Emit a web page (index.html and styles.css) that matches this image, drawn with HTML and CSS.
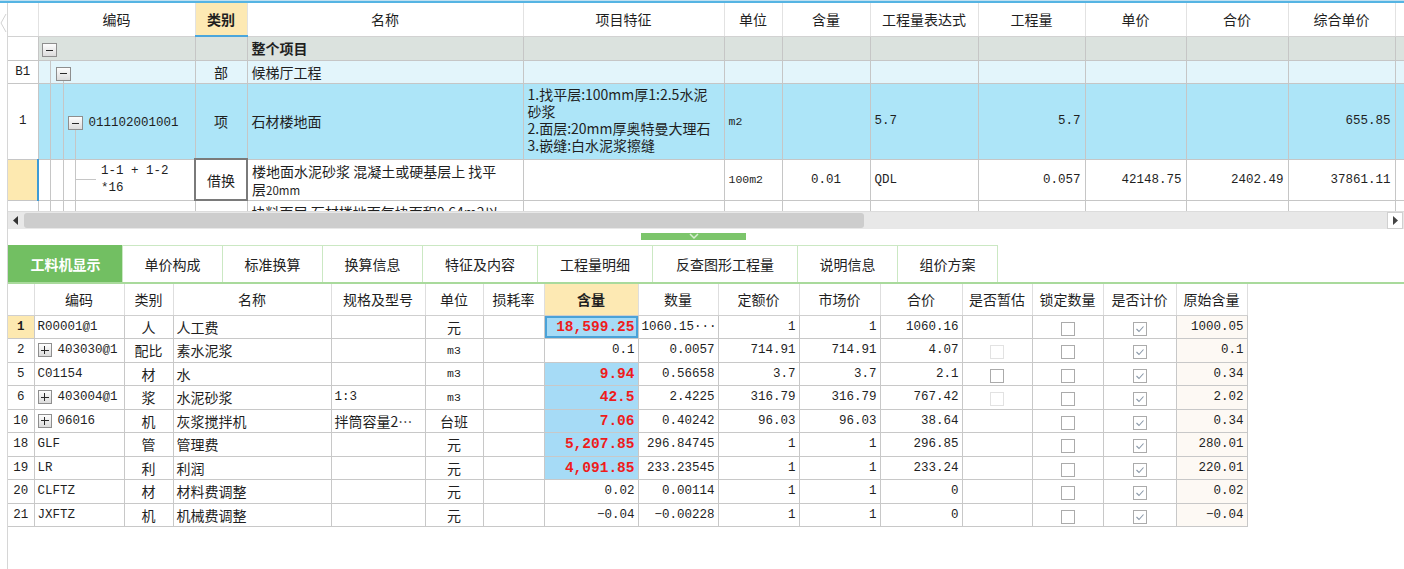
FILE: index.html
```html
<!DOCTYPE html>
<html lang="zh-CN">
  <head>
    <meta charset="UTF-8" />
    <meta name="viewport" content="width=device-width, initial-scale=1.0" />
    <title>分部分项</title>
    <link rel="stylesheet" href="styles.css">
  </head>
  <body>
    <div class="topline"></div>
    <div class="app">
      <div class="gutter">
        <svg width="7" height="20" viewBox="0 0 7 20"><polyline points="6,1 1,10 6,19" fill="none" stroke="#d2d2d2" stroke-width="1"/></svg>
      </div>
      <div class="main">
        <!-- upper grid: bill items -->
        <div class="grid">
          <table class="bill">
            <colgroup>
              <col class="w-no"><col class="w-code"><col class="w-type"><col class="w-name"><col class="w-feat">
              <col class="w-unit"><col class="w-qty"><col class="w-expr"><col class="w-amt"><col class="w-price">
              <col class="w-total"><col class="w-comp"><col class="w-rest">
            </colgroup>
            <tr class="head">
              <th></th><th>编码</th><th class="sel">类别</th><th>名称</th><th>项目特征</th>
              <th>单位</th><th>含量</th><th>工程量表达式</th><th>工程量</th><th>单价</th>
              <th>合价</th><th>综合单价</th><th></th>
            </tr>
            <tr class="r-root">
              <td class="no"></td>
              <td class="tree lv0"><span class="tbox"></span></td>
              <td></td>
              <td class="bold">整个项目</td>
              <td></td><td></td><td></td><td></td><td></td><td></td><td></td><td></td><td></td>
            </tr>
            <tr class="r-part">
              <td class="no m">B1</td>
              <td class="tree lv1"><span class="tbox"></span></td>
              <td class="c">部</td>
              <td>候梯厅工程</td>
              <td></td><td></td><td></td><td></td><td></td><td></td><td></td><td></td><td></td>
            </tr>
            <tr class="r-item">
              <td class="no m">1</td>
              <td class="tree lv2"><span class="tbox"></span><span class="m code">011102001001</span></td>
              <td class="c">项</td>
              <td>石材楼地面</td>
              <td class="feat">1.找平层:100mm厚1:2.5水泥<br>砂浆<br>2.面层:20mm厚奥特曼大理石<br>3.嵌缝:白水泥浆擦缝</td>
              <td class="m small">m2</td>
              <td></td>
              <td class="m">5.7</td>
              <td class="m r">5.7</td>
              <td></td><td></td>
              <td class="m r">655.85</td>
              <td></td>
            </tr>
            <tr class="r-sub">
              <td class="no cur"></td>
              <td class="tree lv3"><span class="m code2">1-1 + 1-2<br>*16</span></td>
              <td class="c focus">借换</td>
              <td class="wrap">楼地面水泥砂浆 混凝土或硬基层上 找平<br>层<span class="small">20mm</span></td>
              <td></td>
              <td class="m small">100m2</td>
              <td class="m c">0.01</td>
              <td class="m">QDL</td>
              <td class="m r">0.057</td>
              <td class="m r">42148.75</td>
              <td class="m r">2402.49</td>
              <td class="m r">37861.11</td>
              <td></td>
            </tr>
            <tr class="r-next">
              <td class="no"></td>
              <td class="tree lv4"></td>
              <td></td>
              <td class="top">块料面层 石材楼地面每块面积0.64m2以</td>
              <td></td><td></td><td></td><td></td><td></td><td></td><td></td><td></td><td></td>
            </tr>
          </table>
        </div>

        <div class="hscroll">
          <div class="sbtn">
            <svg width="6" height="9" viewBox="0 0 6 9"><polygon points="5,0 0,4.5 5,9" fill="#333"/></svg>
          </div>
          <div class="thumb"></div>
          <div class="track"></div>
          <div class="sbtn right">
            <svg width="6" height="9" viewBox="0 0 6 9"><polygon points="1,0 6,4.5 1,9" fill="#444"/></svg>
          </div>
        </div>

        <div class="splitter">
          <div class="handle">
            <svg width="12" height="7" viewBox="0 0 12 7"><polyline points="2,1 6,5 10,1" fill="none" stroke="#d8efd2" stroke-width="1.5"/></svg>
          </div>
        </div>

        <div class="tabs">
          <div class="tab active t114">工料机显示</div>
          <div class="tab t100">单价构成</div>
          <div class="tab t100">标准换算</div>
          <div class="tab t100">换算信息</div>
          <div class="tab t115">特征及内容</div>
          <div class="tab t115">工程量明细</div>
          <div class="tab t145">反查图形工程量</div>
          <div class="tab t100">说明信息</div>
          <div class="tab t100">组价方案</div>
        </div>

        <!-- lower grid: labour, material, machine -->
        <table class="lmm">
          <colgroup>
            <col class="w-bno"><col class="w-bcode"><col class="w-btype"><col class="w-bname"><col class="w-spec">
            <col class="w-bunit"><col class="w-loss"><col class="w-hl"><col class="w-num"><col class="w-quota">
            <col class="w-market"><col class="w-sum"><col class="w-est"><col class="w-lock"><col class="w-calc"><col class="w-orig">
          </colgroup>
          <tr class="head">
            <th></th><th>编码</th><th>类别</th><th>名称</th><th>规格及型号</th><th>单位</th><th>损耗率</th>
            <th class="sel">含量</th><th>数量</th><th>定额价</th><th>市场价</th><th>合价</th>
            <th>是否暂估</th><th>锁定数量</th><th>是否计价</th><th>原始含量</th>
          </tr>
          <tr>
            <td class="no cur bold m">1</td><td class="m">R00001@1</td><td class="c">人</td><td>人工费</td><td></td><td class="c">元</td><td></td>
            <td class="hl focus-hl r">18,599.25</td><td class="m r">1060.15···</td><td class="m r">1</td><td class="m r">1</td><td class="m r">1060.16</td>
            <td></td><td class="c"><span class="cb"></span></td><td class="c"><span class="cb"><svg width="12" height="12" viewBox="0 0 12 12"><polyline points="2.5,6 5,8.5 9.5,3.5" fill="none" stroke="#8a98a8" stroke-width="1.1"/></svg></span></td><td class="orig m r">1000.05</td>
          </tr>
          <tr>
            <td class="no m">2</td><td class="m"><span class="tbox plus"></span><span class="code">403030@1</span></td><td class="c">配比</td><td>素水泥浆</td><td></td><td class="c m small">m3</td><td></td>
            <td class="m r">0.1</td><td class="m r">0.0057</td><td class="m r">714.91</td><td class="m r">714.91</td><td class="m r">4.07</td>
            <td class="c"><span class="cb faint"></span></td><td class="c"><span class="cb"></span></td><td class="c"><span class="cb"><svg width="12" height="12" viewBox="0 0 12 12"><polyline points="2.5,6 5,8.5 9.5,3.5" fill="none" stroke="#8a98a8" stroke-width="1.1"/></svg></span></td><td class="orig m r">0.1</td>
          </tr>
          <tr>
            <td class="no m">5</td><td class="m">C01154</td><td class="c">材</td><td>水</td><td></td><td class="c m small">m3</td><td></td>
            <td class="hl r">9.94</td><td class="m r">0.56658</td><td class="m r">3.7</td><td class="m r">3.7</td><td class="m r">2.1</td>
            <td class="c"><span class="cb"></span></td><td class="c"><span class="cb"></span></td><td class="c"><span class="cb"><svg width="12" height="12" viewBox="0 0 12 12"><polyline points="2.5,6 5,8.5 9.5,3.5" fill="none" stroke="#8a98a8" stroke-width="1.1"/></svg></span></td><td class="orig m r">0.34</td>
          </tr>
          <tr>
            <td class="no m">6</td><td class="m"><span class="tbox plus"></span><span class="code">403004@1</span></td><td class="c">浆</td><td>水泥砂浆</td><td class="m">1:3</td><td class="c m small">m3</td><td></td>
            <td class="hl r">42.5</td><td class="m r">2.4225</td><td class="m r">316.79</td><td class="m r">316.79</td><td class="m r">767.42</td>
            <td class="c"><span class="cb faint"></span></td><td class="c"><span class="cb"></span></td><td class="c"><span class="cb"><svg width="12" height="12" viewBox="0 0 12 12"><polyline points="2.5,6 5,8.5 9.5,3.5" fill="none" stroke="#8a98a8" stroke-width="1.1"/></svg></span></td><td class="orig m r">2.02</td>
          </tr>
          <tr>
            <td class="no m">10</td><td class="m"><span class="tbox plus"></span><span class="code">06016</span></td><td class="c">机</td><td>灰浆搅拌机</td><td>拌筒容量2…</td><td class="c">台班</td><td></td>
            <td class="hl r">7.06</td><td class="m r">0.40242</td><td class="m r">96.03</td><td class="m r">96.03</td><td class="m r">38.64</td>
            <td></td><td class="c"><span class="cb"></span></td><td class="c"><span class="cb"><svg width="12" height="12" viewBox="0 0 12 12"><polyline points="2.5,6 5,8.5 9.5,3.5" fill="none" stroke="#8a98a8" stroke-width="1.1"/></svg></span></td><td class="orig m r">0.34</td>
          </tr>
          <tr>
            <td class="no m">18</td><td class="m">GLF</td><td class="c">管</td><td>管理费</td><td></td><td class="c">元</td><td></td>
            <td class="hl r">5,207.85</td><td class="m r">296.84745</td><td class="m r">1</td><td class="m r">1</td><td class="m r">296.85</td>
            <td></td><td class="c"><span class="cb"></span></td><td class="c"><span class="cb"><svg width="12" height="12" viewBox="0 0 12 12"><polyline points="2.5,6 5,8.5 9.5,3.5" fill="none" stroke="#8a98a8" stroke-width="1.1"/></svg></span></td><td class="orig m r">280.01</td>
          </tr>
          <tr>
            <td class="no m">19</td><td class="m">LR</td><td class="c">利</td><td>利润</td><td></td><td class="c">元</td><td></td>
            <td class="hl r">4,091.85</td><td class="m r">233.23545</td><td class="m r">1</td><td class="m r">1</td><td class="m r">233.24</td>
            <td></td><td class="c"><span class="cb"></span></td><td class="c"><span class="cb"><svg width="12" height="12" viewBox="0 0 12 12"><polyline points="2.5,6 5,8.5 9.5,3.5" fill="none" stroke="#8a98a8" stroke-width="1.1"/></svg></span></td><td class="orig m r">220.01</td>
          </tr>
          <tr>
            <td class="no m">20</td><td class="m">CLFTZ</td><td class="c">材</td><td>材料费调整</td><td></td><td class="c">元</td><td></td>
            <td class="m r">0.02</td><td class="m r">0.00114</td><td class="m r">1</td><td class="m r">1</td><td class="m r">0</td>
            <td></td><td class="c"><span class="cb"></span></td><td class="c"><span class="cb"><svg width="12" height="12" viewBox="0 0 12 12"><polyline points="2.5,6 5,8.5 9.5,3.5" fill="none" stroke="#8a98a8" stroke-width="1.1"/></svg></span></td><td class="orig m r">0.02</td>
          </tr>
          <tr>
            <td class="no m">21</td><td class="m">JXFTZ</td><td class="c">机</td><td>机械费调整</td><td></td><td class="c">元</td><td></td>
            <td class="m r">−0.04</td><td class="m r">−0.00228</td><td class="m r">1</td><td class="m r">1</td><td class="m r">0</td>
            <td></td><td class="c"><span class="cb"></span></td><td class="c"><span class="cb"><svg width="12" height="12" viewBox="0 0 12 12"><polyline points="2.5,6 5,8.5 9.5,3.5" fill="none" stroke="#8a98a8" stroke-width="1.1"/></svg></span></td><td class="orig m r">−0.04</td>
          </tr>
        </table>
      </div>
    </div>
  </body>
</html>
```

FILE: styles.css
```css
* {
  box-sizing: border-box;
}

html,
body {
  height: 100%;
}

body {
  margin: 0;
  font-family: "Noto Sans CJK SC", "Noto Sans", sans-serif;
  font-size: 14px;
  color: #1f1f1f;
  background: #fff;
  overflow: hidden;
}

.topline {
  height: 3px;
  background: #55b4e3;
  border-top: 1px solid #bfe0f1;
}

.app {
  display: flex;
  height: calc(100% - 3px);
}

.gutter {
  width: 7px;
  flex: none;
  padding-top: 10px;
}

.main {
  flex: 1;
  min-width: 0;
  border-left: 1px solid #d6d6d6;
}

table {
  border-collapse: collapse;
  table-layout: fixed;
}

td,
th {
  padding: 0 4px;
  overflow: hidden;
  white-space: nowrap;
  vertical-align: middle;
  text-align: left;
}

.m {
  font-family: "Liberation Mono", monospace;
  font-size: 12.5px;
}

.small {
  font-size: 11.5px;
}

.c {
  text-align: center;
}

.r {
  text-align: right;
}

.bold {
  font-weight: bold;
}

/* upper grid */
.grid {
  height: 208px;
  overflow: hidden;
}

.bill {
  width: 1407px;
}

.w-no { width: 30px; }
.w-code { width: 157px; }
.w-type { width: 52px; }
.w-name { width: 276px; }
.w-feat { width: 201px; }
.w-unit { width: 58px; }
.w-qty { width: 88px; }
.w-expr { width: 108px; }
.w-amt { width: 107px; }
.w-price { width: 101px; }
.w-total { width: 102px; }
.w-comp { width: 107px; }
.w-rest { width: 20px; }

.bill td {
  border: 1px solid #c6c6c6;
}

.bill td:first-child,
.bill th:first-child {
  border-left: none;
}

.bill .head {
  height: 33px;
}

.bill th {
  font-weight: normal;
  text-align: center;
  background: #fff;
  border: 1px solid #e2e2e2;
  border-top: none;
  border-bottom-color: #d2d2d2;
}

th.sel {
  background: #fde9b3;
  font-weight: bold;
  border-bottom: 2px solid #4ba6dc;
}

.r-root {
  height: 24px;
  background: #dbe2de;
}

.r-part {
  height: 23px;
  background: #e3f5fb;
}

.r-item {
  height: 76px;
  background: #ade5f8;
}

.r-sub {
  height: 41px;
  background: #fff;
}

.r-next {
  height: 30px;
}

td.no {
  background: #fff;
  text-align: center;
  padding: 0;
}

td.cur {
  background: #fde9b0;
  border-right: 2px solid #3d9bd6;
}

.tree {
  padding: 0 0 0 3px;
}

.tree.lv1 {
  padding-left: 17px;
  background:
    linear-gradient(#c6c6c6, #c6c6c6) 11px 0 / 1px 100% no-repeat,
    linear-gradient(#c6c6c6, #c6c6c6) 24px 100% / 1px 7px no-repeat;
}

.tree.lv2 {
  padding-left: 29px;
  background:
    linear-gradient(#c6c6c6, #c6c6c6) 11px 0 / 1px 100% no-repeat,
    linear-gradient(#c6c6c6, #c6c6c6) 24px 0 / 1px 100% no-repeat,
    linear-gradient(#c6c6c6, #c6c6c6) 36px 100% / 1px 30px no-repeat;
}

.tree.lv3 {
  padding-left: 62px;
  background:
    linear-gradient(#c6c6c6, #c6c6c6) 11px 0 / 1px 100% no-repeat,
    linear-gradient(#c6c6c6, #c6c6c6) 24px 0 / 1px 100% no-repeat,
    linear-gradient(#c6c6c6, #c6c6c6) 36px 0 / 1px 100% no-repeat,
    linear-gradient(#c6c6c6, #c6c6c6) 36px 50% / 21px 1px no-repeat;
}

.tree.lv4 {
  background:
    linear-gradient(#c6c6c6, #c6c6c6) 11px 0 / 1px 100% no-repeat,
    linear-gradient(#c6c6c6, #c6c6c6) 24px 0 / 1px 100% no-repeat,
    linear-gradient(#c6c6c6, #c6c6c6) 36px 0 / 1px 100% no-repeat;
}

.tbox {
  display: inline-block;
  width: 15px;
  height: 14px;
  vertical-align: middle;
  border: 1px solid #8e8e8e;
  background:
    linear-gradient(#2a2a2a, #2a2a2a) center / 7px 1px no-repeat,
    linear-gradient(#fdfdfd, #dcdcdc);
}

.tbox.plus {
  width: 14px;
  background:
    linear-gradient(#2a2a2a, #2a2a2a) center / 8px 1px no-repeat,
    linear-gradient(#2a2a2a, #2a2a2a) center / 1px 8px no-repeat,
    linear-gradient(#fdfdfd, #dcdcdc);
}

.code {
  margin-left: 6px;
  vertical-align: middle;
}

.code2 {
  display: inline-block;
  line-height: 17px;
  font-size: 12.5px;
}

.feat {
  line-height: 17.3px;
  padding-top: 2px;
  vertical-align: top;
}

.wrap {
  line-height: 18px;
  padding-top: 2px;
  vertical-align: top;
}

.top {
  vertical-align: top;
  padding-top: 1px;
}

td.focus {
  border: 2px solid #7a7a7a;
}

/* horizontal scroll bar */
.hscroll {
  display: flex;
  height: 18px;
  background: #e8e8e8;
  border-top: 1px solid #dcdcdc;
  padding: 0;
}

.sbtn {
  width: 16px;
  flex: none;
  display: flex;
  align-items: center;
  justify-content: center;
}

.sbtn.right {
  background: #fff;
  border: 1px solid #d0d0d0;
  margin-right: 1px;
}

.thumb {
  width: 840px;
  margin: 1px 0;
  background: #cdcdcd;
  border-radius: 3px;
}

.track {
  flex: 1;
}

/* splitter */
.splitter {
  height: 16px;
  padding-top: 4px;
}

.handle {
  width: 105px;
  height: 7px;
  margin-left: 633px;
  background: #7cc56b;
  display: flex;
  justify-content: center;
  overflow: hidden;
}

/* tabs */
.tabs {
  display: flex;
  height: 39px;
  border-bottom: 2px solid #a9da9c;
}

.tab {
  display: flex;
  align-items: center;
  justify-content: center;
  border: 1px solid #cbe8c3;
  border-bottom: none;
  margin-right: -1px;
  color: #222;
  background: #fff;
}

.tab.active {
  background: #72bf62;
  border-color: #72bf62;
  color: #fff;
  font-weight: bold;
}

.t114 { width: 115px; }
.t100 { width: 101px; }
.t115 { width: 116px; }
.t145 { width: 146px; }

/* lower grid */
.lmm {
  width: 1239px;
  border-bottom: 1px solid #c6c6c6;
}

.w-bno { width: 26px; }
.w-bcode { width: 90px; }
.w-btype { width: 49px; }
.w-bname { width: 158px; }
.w-spec { width: 94px; }
.w-bunit { width: 58px; }
.w-loss { width: 61px; }
.w-hl { width: 94px; }
.w-num { width: 80px; }
.w-quota { width: 81px; }
.w-market { width: 81px; }
.w-sum { width: 82px; }
.w-est { width: 70px; }
.w-lock { width: 71px; }
.w-calc { width: 73px; }
.w-orig { width: 71px; }

.lmm .head {
  height: 31px;
}

.lmm th {
  font-weight: normal;
  text-align: center;
  background: #fff;
  border: 1px solid #dedede;
  border-top: none;
  border-bottom-color: #cfcfcf;
  padding: 0 2px;
}

.lmm th.sel {
  font-weight: bold;
  background: #fde9b3;
  border-bottom: 1px solid #cfcfcf;
}

.lmm tr {
  height: 23.5px;
}

.lmm td {
  border: 1px solid #c8c8c8;
  padding: 0 3px;
}

.lmm td:first-child,
.lmm th:first-child {
  border-left: none;
}

.lmm td.no {
  font-size: 12.5px;
}

.hl {
  background: #a6dbf6;
  color: #ee1c1c;
  font-weight: bold;
  font-family: "Liberation Mono", monospace;
  font-size: 14.5px;
}

.focus-hl {
  box-shadow: inset 0 0 0 2px #4aa2d8;
}

.orig {
  background: #fdf9f4;
}

.cb {
  display: inline-block;
  width: 14px;
  height: 14px;
  border: 1px solid #ababab;
  background: #fff;
  vertical-align: middle;
}

.cb svg {
  display: block;
}

.cb.faint {
  border-color: #e2e2e2;
}
```
